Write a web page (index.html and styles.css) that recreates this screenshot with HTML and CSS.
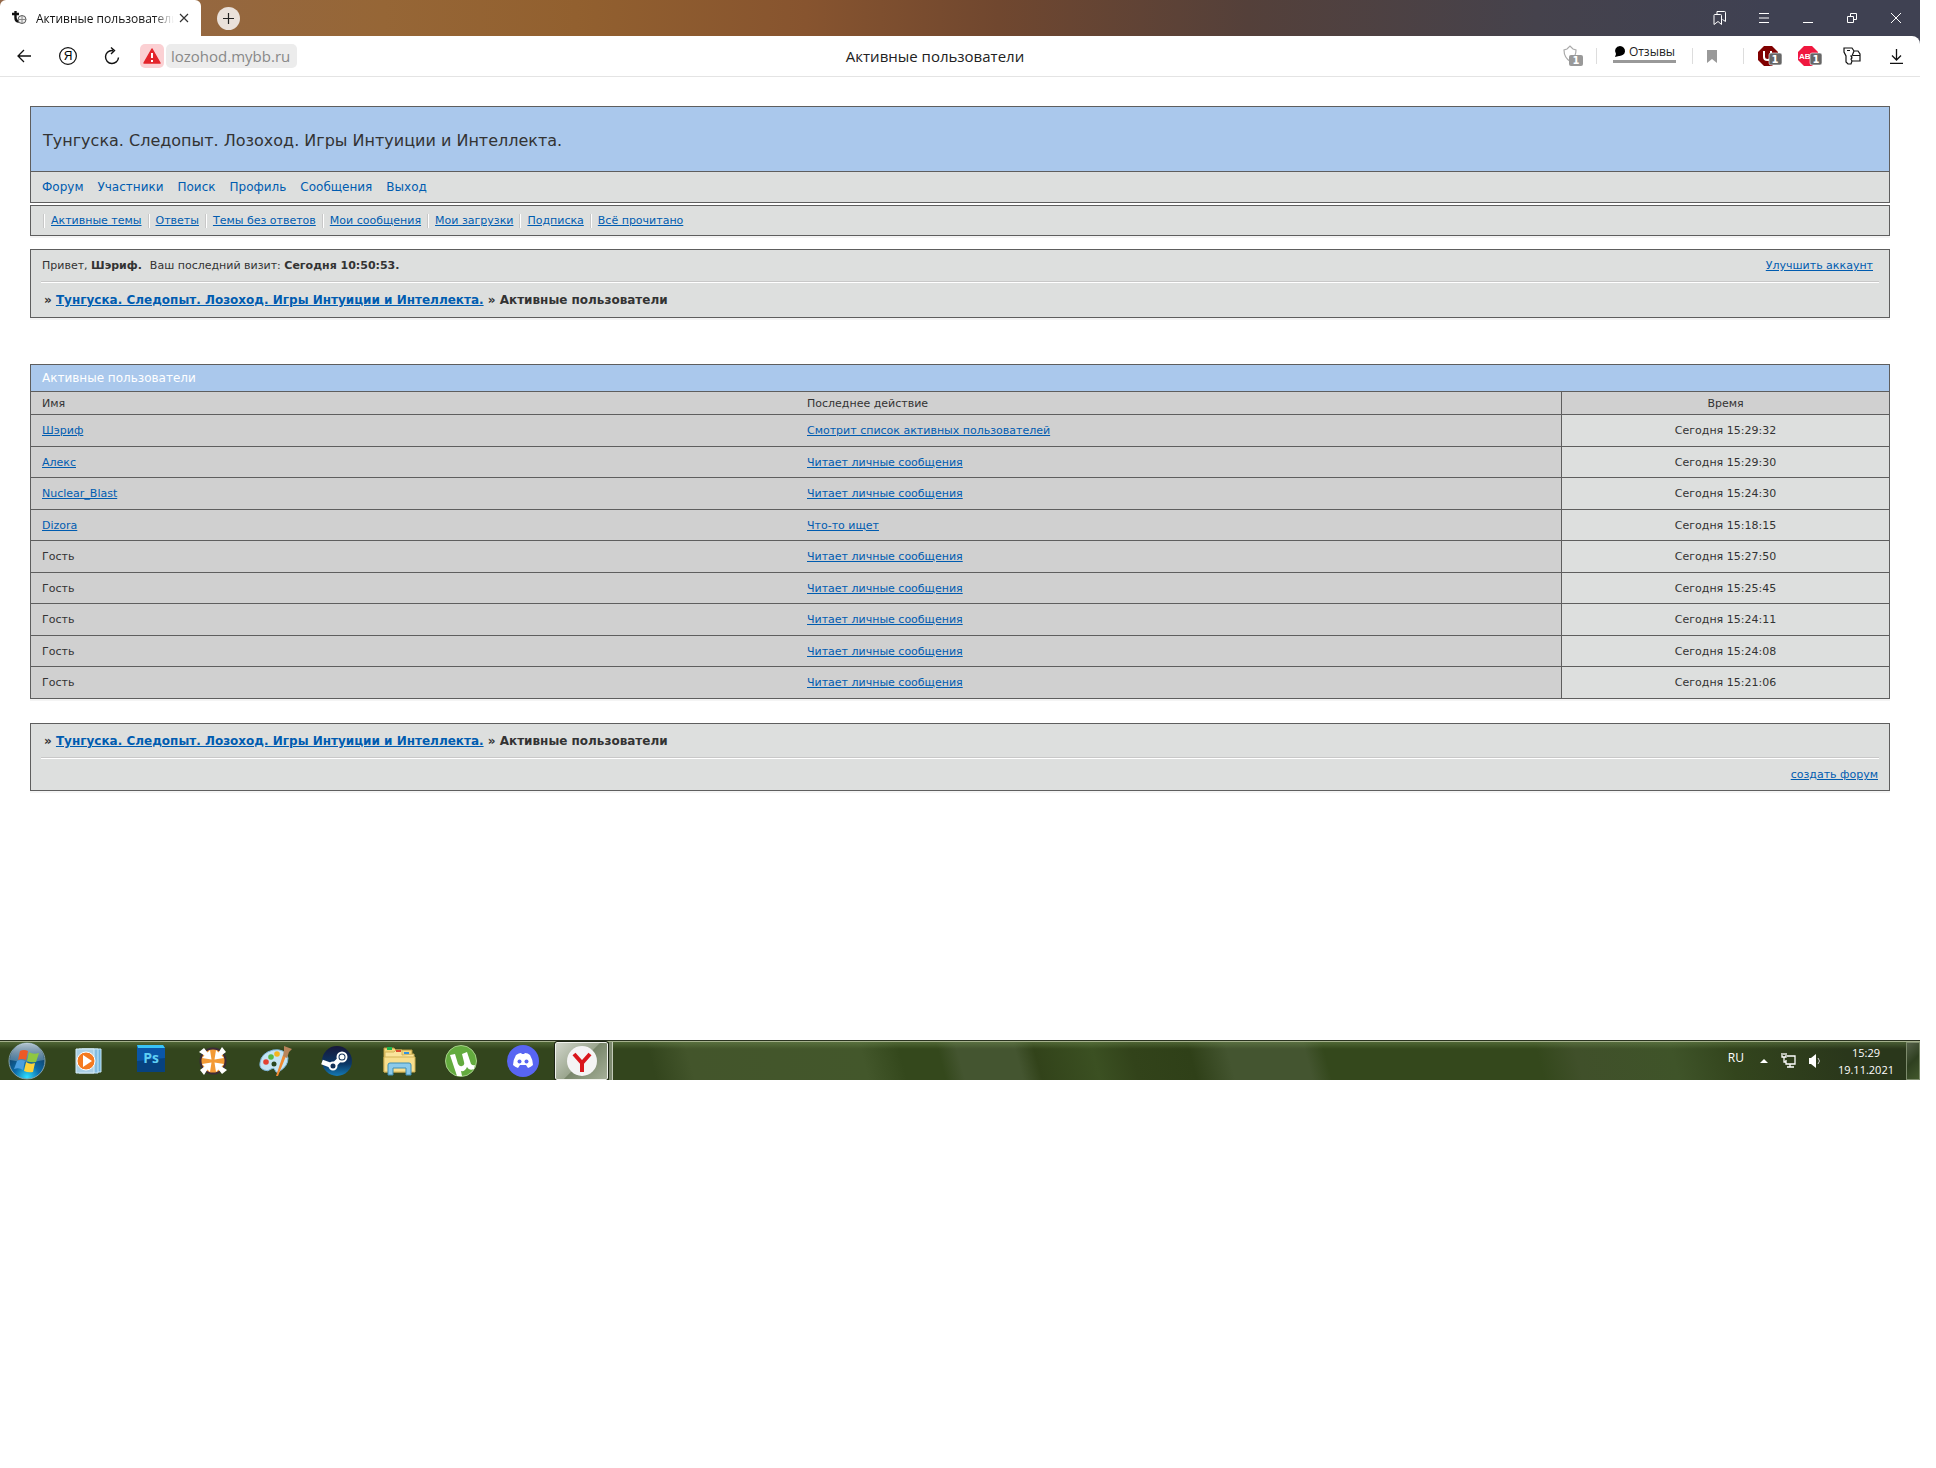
FILE: index.html
```html
<!DOCTYPE html>
<html lang="ru">
<head>
    <meta charset="UTF-8">
    <meta name="viewport" content="width=device-width, initial-scale=1.0">
    <title>Активные пользователи</title>
    <link rel="stylesheet" href="styles.css">
</head>
<body>
    <div class="browser">
        <div class="tabstrip">
            <div class="tab">
                <svg class="favicon" width="16" height="16" viewBox="0 0 16 16"><path d="M3.500 1v7q0 3.500 3.500 3.500M0 4h7" fill="none" stroke="#111" stroke-width="2.400"/><circle cx="10" cy="9.500" r="4" fill="#eee" stroke="#555"/><path d="M6 9.500h8M10 5.500v8" fill="none" stroke="#888"/></svg>
                <span class="tab-title">Активные пользователи</span>
                <button class="tab-close" aria-label="Закрыть вкладку"><svg width="10" height="10" viewBox="0 0 10 10"><path d="M1 1l8 8M9 1L1 9" stroke="#333" stroke-width="1.200"/></svg></button>
            </div>
            <button class="new-tab" aria-label="Новая вкладка"><svg width="11" height="11" viewBox="0 0 11 11"><path d="M5.500 0v11M0 5.500h11" stroke="#222" stroke-width="1.200"/></svg></button>
            <div class="window-buttons">
                <button aria-label="Закладки"><svg width="14" height="16" viewBox="0 0 14 16" fill="none" stroke="#fff"><path d="M1.500 4.500h6q1 0 1 1v9l-3.500-3-4 3v-9q0-1 .5-1zM4 4V1.500h7.500q1 0 1 1v9l-3-2"/></svg></button>
                <button aria-label="Меню"><svg width="10" height="10" viewBox="0 0 10 10"><path d="M0 .5h10M0 5h10M0 9.500h10" stroke="#fff"/></svg></button>
                <button aria-label="Свернуть"><svg width="10" height="10" viewBox="0 0 10 10"><path d="M0 9.500h10" stroke="#fff"/></svg></button>
                <button aria-label="Окно"><svg width="10" height="10" viewBox="0 0 10 10" fill="none" stroke="#fff"><path d="M.5 3.500h6v6h-6zM3.500 3V.5h6v6H7"/></svg></button>
                <button aria-label="Закрыть"><svg width="10" height="10" viewBox="0 0 10 10"><path d="M0 0l10 10M10 0L0 10" stroke="#fff"/></svg></button>
            </div>
        </div>
        <div class="toolbar-back">
            <div class="toolbar">
                <div class="toolbar-left">
                    <button class="tool" aria-label="Назад"><svg width="14" height="14" viewBox="0 0 14 14" fill="none" stroke="#111" stroke-width="1.300"><path d="M14 7H1M7 1L1 7l6 6"/></svg></button>
                    <button class="tool" aria-label="Яндекс"><svg width="18" height="18" viewBox="0 0 18 18"><circle cx="9" cy="9" r="8.400" fill="none" stroke="#111" stroke-width="1.200"/><text class="ya" x="9" y="13" text-anchor="middle">Я</text></svg></button>
                    <button class="tool" aria-label="Обновить"><svg width="16" height="18" viewBox="0 0 16 18" fill="none" stroke="#111" stroke-width="1.400"><path d="M9 3.500H8a6.500 6.500 0 1 0 6.500 7M7 .5l3.500 3L7 7"/></svg></button>
                    <button class="warning" aria-label="Не защищено"><svg width="18" height="16" viewBox="0 0 18 16"><path d="M9 1l8 14H1z" fill="#e3242b" stroke="#e3242b" stroke-width="1.500" stroke-linejoin="round"/><path d="M9 5v5M9 12v2" stroke="#fff" stroke-width="2"/></svg></button>
                    <button class="address">lozohod.mybb.ru</button>
                </div>
                <div class="page-name">Активные пользователи</div>
                <div class="toolbar-right">
                    <button class="ext shield" aria-label="Protect"><svg width="20" height="22" viewBox="0 0 20 22"><path d="M8 17Q1 13 1 5L4 4l3-3 3 3 3 1q0 3-1 5" fill="none" stroke="#aaa" stroke-width="1.200"/><rect x="6" y="10" width="14" height="11" rx="2" fill="#999"/><text class="count" x="13" y="19" text-anchor="middle">1</text></svg></button>
                    <span class="divider"></span>
                    <button class="reviews"><svg width="12" height="12" viewBox="0 0 12 12"><path d="M6 0a5.500 5 0 1 1-1 10L1 11l1-3A5 5 0 0 1 6 0z"/></svg>Отзывы</button>
                    <span class="divider"></span>
                    <button class="ext mark" aria-label="Добавить в закладки"><svg width="10" height="13" viewBox="0 0 10 13"><path d="M0 0h10v13L5 9l-5 4z" fill="#999"/></svg></button>
                    <span class="divider"></span>
                    <button class="ext ublock" aria-label="uBlock"><svg width="24" height="20" viewBox="0 0 24 20"><path d="M6 0h8l6 6v8l-6 6H6l-6-6V6z" fill="#800000"/><path d="M6 5v6q0 3 3.500 3t3.500-3V5" fill="none" stroke="#fff" stroke-width="2"/><rect x="11" y="7" width="13" height="12" rx="2" fill="#666" stroke="#fff" stroke-width=".6"/><text class="count" x="17" y="17" text-anchor="middle">1</text></svg></button>
                    <button class="ext" aria-label="Adblock Plus"><svg width="24" height="20" viewBox="0 0 24 20"><path d="M6 0h8l6 6v8l-6 6H6l-6-6V6z" fill="#f0183f"/><text class="abp" x="1" y="13">AB</text><rect x="12" y="7" width="12" height="12" rx="2" fill="#666" stroke="#fff" stroke-width=".6"/><text class="count" x="18" y="17" text-anchor="middle">1</text></svg></button>
                    <button class="ext keys" aria-label="Пароли"><svg width="18" height="18" viewBox="0 0 18 18" fill="none" stroke="#111" stroke-width="1.200"><path d="M1 1h8l2 3-2 5H8l1 2-1 1 1 2-1 3H5L3 15V9L1 5zM4 3.500h3M11 4h4l2 3v7H9M10 8.500h7"/></svg></button>
                    <button class="ext save" aria-label="Загрузки"><svg width="13" height="15" viewBox="0 0 13 15" fill="none" stroke="#111" stroke-width="1.300"><path d="M6.500 0v11M2 6.500L6.500 11 11 6.500M0 14.300h13"/></svg></button>
                </div>
            </div>
        </div>

        <main class="forum">
            <header class="title-box">
                <h1>Тунгуска. Следопыт. Лозоход. Игры Интуиции и Интеллекта.</h1>
            </header>
            <nav class="navlinks">
                <a href="#">Форум</a>
                <a href="#">Участники</a>
                <a href="#">Поиск</a>
                <a href="#">Профиль</a>
                <a href="#">Сообщения</a>
                <a href="#">Выход</a>
            </nav>
            <ul class="userlinks">
                <li><a href="#">Активные темы</a></li>
                <li><a href="#">Ответы</a></li>
                <li><a href="#">Темы без ответов</a></li>
                <li><a href="#">Мои сообщения</a></li>
                <li><a href="#">Мои загрузки</a></li>
                <li><a href="#">Подписка</a></li>
                <li><a href="#">Всё прочитано</a></li>
            </ul>
            <section class="status">
                <div class="welcome">
                    <span class="hello">Привет, <strong>Шэриф.</strong></span>
                    <span>Ваш последний визит: <strong>Сегодня 10:50:53.</strong></span>
                    <a class="upgrade" href="#">Улучшить аккаунт</a>
                </div>
                <p class="crumbs">» <a href="#">Тунгуска. Следопыт. Лозоход. Игры Интуиции и Интеллекта.</a> » Активные пользователи</p>
            </section>

            <section class="online">
                <h2>Активные пользователи</h2>
                <table>
                    <thead>
                        <tr><th class="col-name">Имя</th><th class="col-action">Последнее действие</th><th class="col-time">Время</th></tr>
                    </thead>
                    <tbody>
                        <tr><td><a href="#">Шэриф</a></td><td><a href="#">Смотрит список активных пользователей</a></td><td class="time">Сегодня 15:29:32</td></tr>
                        <tr><td><a href="#">Алекс</a></td><td><a href="#">Читает личные сообщения</a></td><td class="time">Сегодня 15:29:30</td></tr>
                        <tr><td><a href="#">Nuclear_Blast</a></td><td><a href="#">Читает личные сообщения</a></td><td class="time">Сегодня 15:24:30</td></tr>
                        <tr><td><a href="#">Dizora</a></td><td><a href="#">Что-то ищет</a></td><td class="time">Сегодня 15:18:15</td></tr>
                        <tr><td>Гость</td><td><a href="#">Читает личные сообщения</a></td><td class="time">Сегодня 15:27:50</td></tr>
                        <tr><td>Гость</td><td><a href="#">Читает личные сообщения</a></td><td class="time">Сегодня 15:25:45</td></tr>
                        <tr><td>Гость</td><td><a href="#">Читает личные сообщения</a></td><td class="time">Сегодня 15:24:11</td></tr>
                        <tr><td>Гость</td><td><a href="#">Читает личные сообщения</a></td><td class="time">Сегодня 15:24:08</td></tr>
                        <tr><td>Гость</td><td><a href="#">Читает личные сообщения</a></td><td class="time">Сегодня 15:21:06</td></tr>
                    </tbody>
                </table>
            </section>

            <footer class="about">
                <p class="crumbs">» <a href="#">Тунгуска. Следопыт. Лозоход. Игры Интуиции и Интеллекта.</a> » Активные пользователи</p>
                <p class="create"><a href="#">создать форум</a></p>
            </footer>
        </main>

        <div class="taskbar">
            <button class="start" aria-label="Пуск">
                <svg width="38" height="38" viewBox="0 0 38 38">
                    <defs>
                        <radialGradient id="orb" cx=".5" cy=".95" r=".8"><stop offset="0" stop-color="#2fe0ff"/><stop offset=".45" stop-color="#0c6cab"/><stop offset="1" stop-color="#123a5c"/></radialGradient>
                        <linearGradient id="shine" x2="0" y2="1"><stop offset="0" stop-color="#dde9f0" stop-opacity=".8"/><stop offset="1" stop-color="#8fb0c4" stop-opacity=".4"/></linearGradient>
                    </defs>
                    <circle cx="19" cy="19" r="18" fill="url(#orb)" stroke="#86a3ad"/>
                    <path d="M2 18a17 17 0 0 1 34 0Q19 22 2 18z" fill="url(#shine)"/>
                    <path d="M12 9q4-2 8 0l-2 9q-4-2-8 0z" fill="#ec5a26"/>
                    <path d="M21 10q4 3 10 1l-3 9q-5 1-9-1z" fill="#8fc741"/>
                    <path d="M9 19q4-2 8 0l-2 9q-4-3-9-1z" fill="#4a9fe0"/>
                    <path d="M18 20q4 3 9 1l-2 9q-5 1-9-1z" fill="#fdd33a"/>
                </svg>
            </button>
            <button class="app" aria-label="Проигрыватель">
                <svg width="28" height="28" viewBox="0 0 28 28"><path d="M7 2h19v23H7z" fill="#6fb2dc" stroke="#c9e8f7"/><path d="M4 2h19v24H4z" fill="#84bde0" stroke="#c9e8f7"/><path d="M1 2h18v24H1z" fill="#aacfe4" stroke="#d7edf8"/><circle cx="11" cy="14" r="9" fill="#f47a20" stroke="#fff"/><path d="M8 8l9 6-9 6z" fill="#fff"/></svg>
            </button>
            <button class="app raised" aria-label="Photoshop">
                <svg width="30" height="28" viewBox="0 0 30 28"><path d="M1 0h26l2 3v24H1z" fill="#0a56a8"/><path d="M1 0h26l2 3H2z" fill="#39c4f7"/><path d="M1 16l28-3v14H1z" fill="#07427f"/><text class="ps" x="15" y="18" text-anchor="middle">Ps</text></svg>
            </button>
            <button class="app" aria-label="Nexus">
                <svg width="30" height="30" viewBox="0 0 30 30">
                    <circle cx="15" cy="15" r="12.500" fill="#f39a35" stroke="#3b2b38" stroke-width="2"/>
                    <g fill="#fff">
                        <path id="arrow" d="M13.500 13.500L4 12l2.500-2.500L1 6l5-4 3.500 4.500L12 4z"/>
                        <use href="#arrow" transform="rotate(90 15 15)"/>
                        <use href="#arrow" transform="rotate(180 15 15)"/>
                        <use href="#arrow" transform="rotate(270 15 15)"/>
                    </g>
                </svg>
            </button>
            <button class="app" aria-label="Paint">
                <svg width="32" height="32" viewBox="0 0 32 32"><path d="M1 18Q2 8 14 5q12-2 15 8 0 8-8 13-4 3-5-1-1-3-4-1-3 3-7 1-5-2-4-7z" fill="#c5e4f5" stroke="#7eb5d8"/><circle cx="7" cy="17" r="2.800" fill="#e34132"/><circle cx="12" cy="12" r="2.800" fill="#57b847"/><circle cx="18" cy="9" r="2.800" fill="#f5b51d"/><circle cx="15" cy="19" r="2.500" fill="#284622"/><path d="M17 31L24 10l3 1-8 20z" fill="#f08a32"/><path d="M24 11l1-6 0-4 8 3-3 3-2 6z" fill="#b8845a"/></svg>
            </button>
            <button class="app" aria-label="Steam">
                <svg width="32" height="32" viewBox="0 0 32 32"><defs><linearGradient id="steam" x2="0" y2="1"><stop offset="0" stop-color="#17183a"/><stop offset=".6" stop-color="#0b3766"/><stop offset="1" stop-color="#147ab5"/></linearGradient></defs><circle cx="16" cy="16" r="15" fill="url(#steam)"/><path d="M1 17l11 4 8-8" fill="none" stroke="#fff" stroke-width="5"/><circle cx="21" cy="12" r="4.500" fill="#123057" stroke="#fff" stroke-width="2"/><circle cx="21" cy="12" r="2.500" fill="#fff"/><circle cx="12" cy="21" r="3.500" fill="#123057" stroke="#fff" stroke-width="2"/></svg>
            </button>
            <button class="app" aria-label="Проводник">
                <svg width="34" height="32" viewBox="0 0 34 32"><path d="M2 3h10l2 2h16v22H2z" fill="#f3d77b" stroke="#b99a42"/><path d="M5 2h5v3H5z" fill="#21b34b"/><path d="M3 7h9l2-2h6v5l12-1v17H3z" fill="#fae49c" stroke="#d1b359"/><path d="M14 5h5v2h-5z" fill="#dd4a2d"/><path d="M22 7h5v2h-5z" fill="#3292e0"/><path d="M2 12h31v15H2z" fill="#f8df8e" stroke="#d1b359"/><path d="M6 30V20q0-2 2-2h19q2 0 2 2v10h-5v-7H11v7z" fill="#8bcaea" stroke="#3c8db5"/></svg>
            </button>
            <button class="app" aria-label="uTorrent">
                <svg width="32" height="32" viewBox="0 0 32 32"><circle cx="16" cy="16" r="15.500" fill="#63ab3e" stroke="#a5cf89"/><path d="M5 10l5-1 3 10q2 3 4 2 3-1 2-4l-2-8 5-2 4 12q2 2 4 1l-1 4q-5 2-7-2-2 5-6 4l1 5h-5z" fill="#fff"/></svg>
            </button>
            <button class="app" aria-label="Discord">
                <svg width="32" height="32" viewBox="0 0 32 32"><circle cx="16" cy="16" r="16" fill="#5865f2"/><path d="M9 10q3-2 5-2l1 1h2l1-1q3 0 5 2 3 5 3 10-2 2-5 3l-2-3h-6l-2 3q-3-1-5-3 0-5 3-10z" fill="#fff"/><circle cx="12.500" cy="16.500" r="2" fill="#5865f2"/><circle cx="19.500" cy="16.500" r="2" fill="#5865f2"/></svg>
            </button>
            <button class="app-active" aria-label="Яндекс Браузер">
                <svg width="30" height="30" viewBox="0 0 30 30"><circle cx="15" cy="15" r="15" fill="#f4f4f4"/><path d="M7 8l8 9 8-9M15 16v10" fill="none" stroke="#d9161c" stroke-width="4"/></svg>
            </button>
            <span class="stack"></span>
            <div class="tray">
                <button class="lang">RU</button>
                <button aria-label="Скрытые значки"><svg width="8" height="5" viewBox="0 0 8 5"><path d="M0 5l4-4 4 4z" fill="#fff"/></svg></button>
                <button aria-label="Сеть"><svg width="15" height="15" viewBox="0 0 15 15" fill="none" stroke="#fff" stroke-width="1.300"><path d="M6 3h8v8H5V7M6 14h7M9 11v3M1 0v4h4V0M3 4v5h2M3 0v2"/></svg></button>
                <button aria-label="Громкость"><svg width="12" height="14" viewBox="0 0 12 14"><path d="M0 4h2v6H0zM2 4l5-4v14l-5-4z" fill="#fff"/><path d="M9 4q3 3 0 6" fill="none" stroke="#ccc"/></svg></button>
            </div>
            <button class="clock"><span>15:29</span><span>19.11.2021</span></button>
            <button class="show-desktop" aria-label="Рабочий стол"></button>
        </div>
    </div>
</body>
</html>
```
FILE: styles.css
```css
* {
    box-sizing: border-box;
}
body {
    margin: 0;
    padding-right: 16px;
    background: #fff;
    color: #333;
    font-family: Verdana, "DejaVu Sans", sans-serif;
    font-size: 11px;
}
button {
    display: flex;
    align-items: center;
    justify-content: center;
    margin: 0;
    padding: 0;
    border: none;
    background: none;
    font-family: "Open Sans", sans-serif;
    cursor: pointer;
}
svg {
    flex: none;
    overflow: visible;
}
h1, h2, p, ul {
    margin: 0;
    padding: 0;
    font-weight: normal;
}
a {
    color: #005cb0;
}

/* browser window */
.tabstrip {
    display: flex;
    align-items: center;
    height: 36px;
    background: linear-gradient(90deg, #94694a 0%, #966636 20%, #92602f 30%, #87542f 42%, #70472f 52%, #54403a 65%, #45424c 80%, #3f4152 92%, #3f4152 100%);
}
.tab {
    display: flex;
    align-items: center;
    width: 201px;
    height: 36px;
    padding: 0 9px 0 12px;
    border-radius: 6px 6px 0 0;
    background: #fff;
}
.tab-title {
    flex: 1;
    margin-left: 8px;
    overflow: hidden;
    white-space: nowrap;
    color: #111;
    font-family: "Open Sans", sans-serif;
    font-size: 12px;
    -webkit-mask-image: linear-gradient(90deg, #000 85%, transparent);
    mask-image: linear-gradient(90deg, #000 85%, transparent);
}
.tab-close {
    width: 16px;
    height: 16px;
    margin-left: 2px;
}
.new-tab {
    width: 23px;
    height: 23px;
    margin-left: 16px;
    border-radius: 50%;
    background: #eae1da;
}
.window-buttons {
    display: flex;
    margin-left: auto;
    padding-right: 2px;
}
.window-buttons button {
    width: 44px;
    height: 36px;
}
.toolbar-back {
    background: linear-gradient(90deg, #fff 50%, #3f4152 50%);
}
.toolbar {
    display: grid;
    grid-template-columns: 1fr auto 1fr;
    align-items: center;
    height: 41px;
    padding: 0 12px 0 2px;
    border-bottom: 1px solid #e4e4e4;
    border-radius: 0 8px 0 0;
    background: #fff;
}
.toolbar-left, .toolbar-right {
    display: flex;
    align-items: center;
}
.toolbar-right {
    justify-content: flex-end;
}
.tool {
    width: 44px;
    height: 32px;
}
.ya {
    font-family: "Liberation Sans", sans-serif;
    font-size: 12px;
}
.warning {
    width: 24px;
    height: 24px;
    margin-left: 6px;
    border-radius: 5px;
    background: #fbd0d3;
}
.address {
    height: 24px;
    margin-left: 2px;
    padding: 0 7px 0 5px;
    border-radius: 5px;
    background: #ececec;
    color: #888;
    font-size: 15px;
}
.page-name {
    padding-right: 40px;
    color: #222;
    font-family: "Open Sans", sans-serif;
    font-size: 15px;
}
.ext {
    width: 24px;
    height: 32px;
    margin-left: 16px;
}
.shield {
    margin-right: 11px;
}
.mark {
    margin-left: 7px;
    margin-right: 19px;
}
.ublock {
    margin-left: 14px;
}
.keys {
    margin-left: 18px;
}
.save {
    margin-left: 20px;
}
.divider {
    width: 1px;
    height: 16px;
    background: #ddd;
}
.reviews {
    gap: 3px;
    margin: 0 16px 5px;
    padding: 0 1px;
    border-bottom: 3px solid #999;
    color: #222;
    font-size: 12px;
    line-height: 16px;
}
.count {
    fill: #fff;
    font: bold 10px "DejaVu Sans", sans-serif;
}
.abp {
    fill: #fff;
    font: bold 8px "Liberation Sans", sans-serif;
}

/* forum page */
.forum {
    padding: 29px 30px 249px;
}
.title-box {
    padding: 23px 12px 19px;
    border: 1px solid #5e5e5e;
    background: #aac8ec;
}
.title-box h1 {
    font-size: 16px;
    line-height: 22px;
}
.navlinks {
    display: flex;
    gap: 14px;
    padding: 8px 11px 7px;
    border: 1px solid #5e5e5e;
    border-top: none;
    background: #dddfde;
    font-size: 12px;
    line-height: 15px;
}
.navlinks a {
    text-decoration: none;
}
.userlinks {
    display: flex;
    margin-top: 2px;
    padding: 8px 12px 7px;
    border: 1px solid #5e5e5e;
    background: #dddfde;
    box-shadow: 0 2px #f4f4f4;
    line-height: 14px;
    list-style: none;
}
.userlinks li {
    padding: 0 6px 0 7px;
    border-left: 1px solid #c8c8c8;
    box-shadow: inset 1px 0 #fff;
}
.status, .about {
    padding: 0 10px;
    border: 1px solid #5e5e5e;
    background: #dddfde;
    box-shadow: 0 2px #f4f4f4;
}
.status {
    margin-top: 13px;
}
.welcome {
    display: flex;
    gap: 8px;
    padding: 8px 6px 8px 1px;
    border-bottom: 1px solid #c8c8c8;
    line-height: 15px;
}
.upgrade {
    margin-left: auto;
}
.crumbs {
    padding: 9px 3px;
    font-size: 12px;
    font-weight: bold;
    line-height: 16px;
}
.status .crumbs {
    border-top: 1px solid #fff;
}
.online {
    margin-top: 46px;
    border: 1px solid #5e5e5e;
    box-shadow: 0 2px #f4f4f4;
}
.online h2 {
    padding: 5px 11px;
    background: #aac8ec;
    color: #fff;
    font-size: 12px;
    line-height: 16px;
}
.online table {
    width: 100%;
    border-collapse: separate;
    border-spacing: 0;
    table-layout: fixed;
}
.online th, .online td {
    padding: 0 11px;
    border-top: 1px solid #5e5e5e;
    background: #d0d0d0;
    font-weight: normal;
    text-align: left;
}
.online th {
    height: 23px;
}
.online td {
    height: 31px;
}
.online tr:nth-child(odd) td {
    height: 32px;
}
.col-name {
    width: 765px;
}
.online .col-time {
    width: 328px;
}
.online .col-time, .online .time {
    border-left: 1px solid #5e5e5e;
    text-align: center;
}
.online .time {
    background: #dddfde;
}
.about {
    margin-top: 24px;
}
.about .crumbs {
    padding: 9px 3px 8px;
    border-bottom: 1px solid #c8c8c8;
}
.create {
    padding: 8px 1px;
    border-top: 1px solid #fff;
    line-height: 15px;
    text-align: right;
}

/* taskbar */
.taskbar {
    display: flex;
    align-items: center;
    height: 40px;
    border-top: 1px solid #2a3320;
    background:
        linear-gradient(#a4b08c 1px, rgba(120, 150, 90, .4) 1px, transparent 8px),
        linear-gradient(75deg, #33451d 0%, #33451d 34%, #43552b 36%, #43572b 45%, #34481c 47%, #34481c 49%, #445530 50%, #445530 53%, #32431a 54%, #3b5022 57%, #32431a 59%, #2f4018 62%, #445530 64%, #445530 68%, #34481c 69%, #34481c 80%, #40502a 82%, #3f5429 87%, #33451d 90%, #2a371b 96%, #2a371b 100%);
}
.start {
    width: 54px;
    margin-right: 4px;
}
.app {
    width: 62px;
    height: 38px;
}
.raised {
    padding-bottom: 4px;
}
.ps {
    fill: #5fd0f5;
    font: bold 14px "Open Sans", sans-serif;
}
.app-active {
    width: 53px;
    height: 38px;
    margin-left: 1px;
    border: 1px solid #f0f2ec;
    border-radius: 2px;
    outline: 1px solid #1c2414;
    background: linear-gradient(135deg, #d0d5ca 0%, #9ba68e 50%, #78866a 51%, #a5af98 100%);
}
.stack {
    width: 4px;
    height: 38px;
    margin-left: 1px;
    border-right: 1px solid #c3cab8;
    background: #7d8a6f;
}
.tray {
    display: flex;
    align-items: center;
    gap: 13px;
    margin-left: auto;
}
.tray button {
    height: 38px;
}
.tray .lang {
    padding-bottom: 6px;
    margin-right: 3px;
    color: #fff;
    font-size: 12px;
}
.clock {
    flex-direction: column;
    margin: 0 12px 0 17px;
    color: #fff;
    font-size: 11px;
    line-height: 17px;
}
.show-desktop {
    width: 14px;
    height: 38px;
    border: 1px solid #7d8b6c;
    background: linear-gradient(135deg, #55614a, #2f4020 50%, #43582d);
}
```
